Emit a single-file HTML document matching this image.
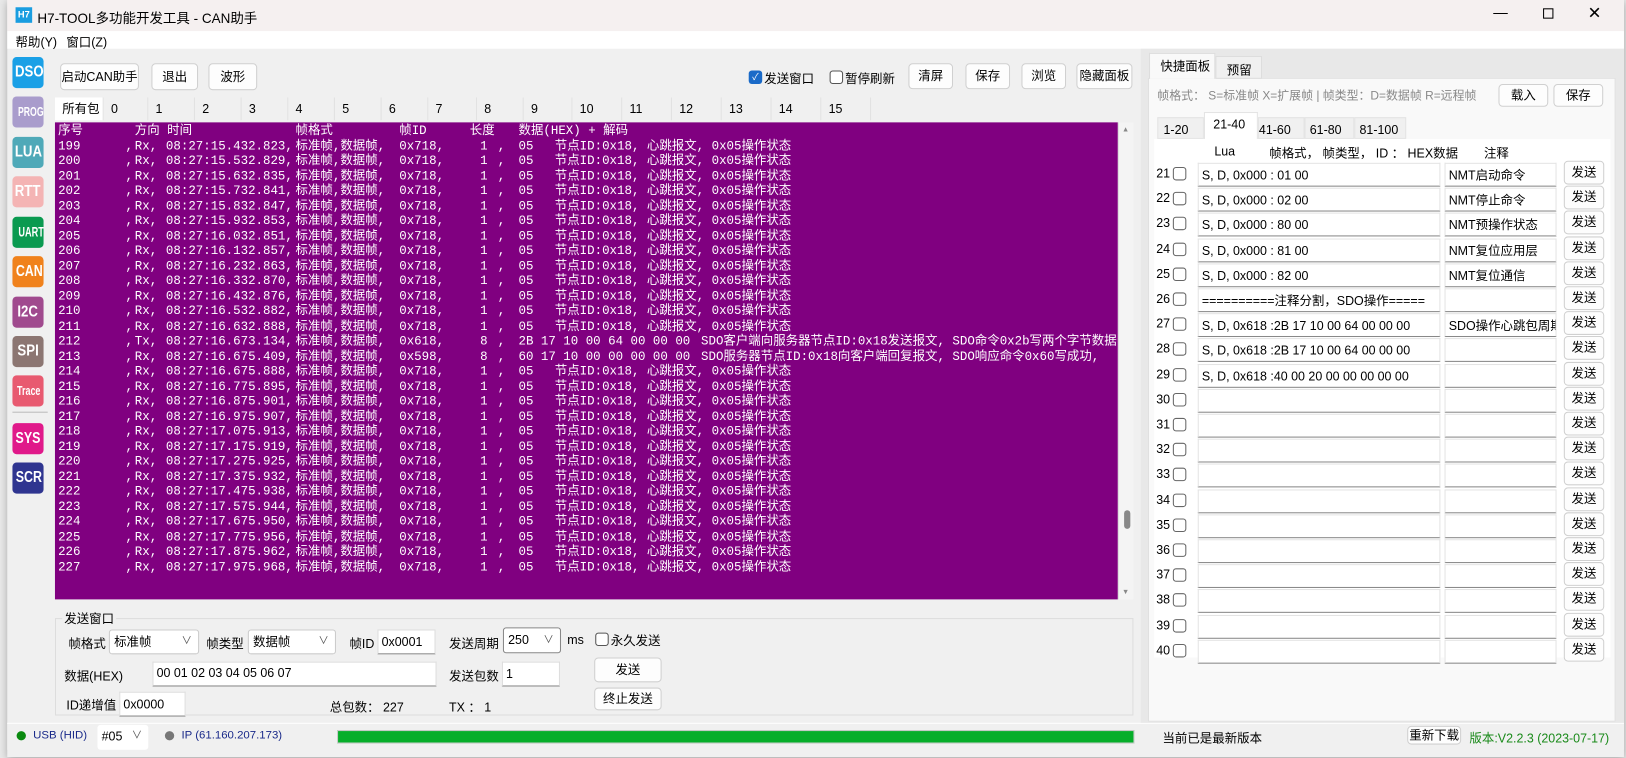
<!DOCTYPE html>
<html><head><meta charset="utf-8"><style>
*{margin:0;padding:0;box-sizing:border-box}
body{width:1626px;height:758px;background:#e9e9e9;font-family:"Liberation Sans","Noto Sans CJK SC",sans-serif;font-size:12px;color:#000;position:relative;overflow:hidden}
#wrap{position:absolute;left:0;top:0;width:1568px;height:731px;transform:scale(1.037);transform-origin:0 0}
.a{position:absolute}
.win{left:7px;top:0;width:1559px;height:730px;background:#f0f0f0;box-shadow:0 2px 8px rgba(0,0,0,.3)}
.btn{position:absolute;background:#fdfdfd;border:1px solid #d0d0d0;border-radius:4px;text-align:center;font-size:12px}
.ic{position:absolute;left:12px;width:30px;height:30px;border-radius:4px;color:#fff;font-weight:bold;font-size:15px;text-align:center;line-height:30px;overflow:hidden;white-space:nowrap}
.ic span{display:inline-block}
.log{left:53px;top:118px;width:1025px;height:460px;background:#800080;color:#fff;font-family:"Liberation Mono","WenQuanYi Zen Hei",monospace;font-size:12px;overflow:hidden}
.r{position:absolute;left:0;height:14px;line-height:14px;white-space:pre;width:1025px}
.r span{position:absolute;top:0}
.s1{left:3px}.s2{left:67px}.s3{left:107px}.s4{left:232px}.s5{left:332px}.s6{left:410px}.s7{left:447px}.s8{left:482px}.s9{left:623px}
.tab{position:absolute;top:94px;height:22px;line-height:22px;border-right:1px solid #e2e2e2;padding-left:7px;font-size:12px}
.inp{position:absolute;background:#fff;border:1px solid #ddd;border-bottom:1px solid #888;font-size:12px;padding-left:3px}
.cb{position:absolute;width:13px;height:13px;border:1px solid #555;border-radius:3px;background:#fff}
.sel{position:absolute;background:#fff;border:1px solid #ccc;border-radius:3px;font-size:12px;padding-left:4px}
.sel:after{content:"\2228";position:absolute;right:6px;top:0;color:#555;font-size:10px}
</style></head><body>
<div id="wrap">
<div class="a win"></div>
<div class="a" style="left:7px;top:0;width:1559px;height:30px;background:#f5f0f0"></div>
<div class="a" style="left:15px;top:7px;width:16px;height:15px;background:#1a9de0;color:#fff;font-size:9px;font-weight:bold;text-align:center;line-height:15px">H7</div>
<div class="a" style="left:36px;top:7px;font-size:13px">H7-TOOL多功能开发工具 - CAN助手</div>
<div class="a" style="left:1440px;top:4px;font-size:14px">&#8212;</div>
<div class="a" style="left:1488px;top:8px;width:10px;height:10px;border:1px solid #000"></div>
<div class="a" style="left:1531px;top:3px;font-size:16px">✕</div>
<div class="a" style="left:7px;top:30px;width:1559px;height:17px;background:#fff"></div>
<div class="a" style="left:15px;top:32px;font-size:12px">帮助(Y)</div>
<div class="a" style="left:64px;top:32px;font-size:12px">窗口(Z)</div>
<div class="ic" style="top:55px;background:#1aa0e6"><span style="transform:scaleX(.85)">DSO</span></div>
<div class="ic" style="top:93px;background:#a99ccc;font-size:12px"><span style="transform:scaleX(.7)">PROG</span></div>
<div class="ic" style="top:132px;background:#4fa9b8"><span style="transform:scaleX(.85)">LUA</span></div>
<div class="ic" style="top:170px;background:#f4b4b4"><span style="transform:scaleX(.85)">RTT</span></div>
<div class="ic" style="top:209px;background:#0a9a50;font-size:13px"><span style="transform:scaleX(.68)">UART</span></div>
<div class="ic" style="top:247px;background:#f0821c"><span style="transform:scaleX(.8)">CAN</span></div>
<div class="ic" style="top:286px;background:#a04a8e"><span style="transform:scaleX(.85)">I2C</span></div>
<div class="ic" style="top:324px;background:#8c7672"><span style="transform:scaleX(.85)">SPI</span></div>
<div class="ic" style="top:362px;background:#e85a70;font-size:12px"><span style="transform:scaleX(.72)">Trace</span></div>
<div class="a" style="left:12px;top:397px;width:34px;height:1px;background:#bbb"></div>
<div class="ic" style="top:408px;background:#e0198a"><span style="transform:scaleX(.8)">SYS</span></div>
<div class="ic" style="top:446px;background:#2f3590"><span style="transform:scaleX(.8)">SCR</span></div>
<div class="btn" style="left:58px;top:61px;width:76px;height:26px;line-height:24px">启动CAN助手</div>
<div class="btn" style="left:146px;top:61px;width:45px;height:26px;line-height:24px">退出</div>
<div class="btn" style="left:201px;top:61px;width:47px;height:26px;line-height:24px">波形</div>
<div class="a" style="left:722px;top:68px;width:13px;height:13px;background:#1a6ac8;border-radius:3px;color:#fff;font-size:9px;text-align:center;line-height:13px">✓</div>
<div class="a" style="left:737px;top:67px;font-size:12px">发送窗口</div>
<div class="cb" style="left:800px;top:68px"></div>
<div class="a" style="left:815px;top:67px;font-size:12px">暂停刷新</div>
<div class="btn" style="left:876px;top:61px;width:43px;height:25px;line-height:23px">清屏</div>
<div class="btn" style="left:931px;top:61px;width:43px;height:25px;line-height:23px">保存</div>
<div class="btn" style="left:985px;top:61px;width:43px;height:25px;line-height:23px">浏览</div>
<div class="btn" style="left:1038px;top:61px;width:54px;height:25px;line-height:23px">隐藏面板</div>
<div class="a" style="left:53px;top:93px;width:788px;height:24px;background:#f0f0f0"></div>
<div class="tab" style="left:53px;width:47px;background:#fff">所有包</div>
<div class="tab" style="left:100px;width:43px">0</div><div class="tab" style="left:143px;width:45px">1</div><div class="tab" style="left:188px;width:45px">2</div><div class="tab" style="left:233px;width:45px">3</div><div class="tab" style="left:278px;width:45px">4</div><div class="tab" style="left:323px;width:45px">5</div><div class="tab" style="left:368px;width:45px">6</div><div class="tab" style="left:413px;width:47px">7</div><div class="tab" style="left:460px;width:45px">8</div><div class="tab" style="left:505px;width:47px">9</div><div class="tab" style="left:552px;width:48px">10</div><div class="tab" style="left:600px;width:48px">11</div><div class="tab" style="left:648px;width:48px">12</div><div class="tab" style="left:696px;width:48px">13</div><div class="tab" style="left:744px;width:48px">14</div><div class="tab" style="left:792px;width:48px">15</div>
<div class="a log">
<div class="r" style="top:1px"><span class="s1">序号</span><span style="left:77px">方向 时间</span><span class="s4">帧格式</span><span class="s5">帧ID</span><span style="left:400px">长度</span><span style="left:447px">数据(HEX) + 解码</span></div>
</div>
<div class="a" style="left:1078px;top:118px;width:15px;height:460px;background:#f4f4f4;border-left:1px solid #ddd"></div>
<div class="a" style="left:1082px;top:122px;font-size:7px;color:#888">▲</div>
<div class="a" style="left:1082px;top:568px;font-size:7px;color:#888">▼</div>
<div class="a" style="left:1084px;top:492px;width:6px;height:18px;background:#888;border-radius:3px"></div>
<div class="a" style="left:53px;top:596px;width:1040px;height:94px;border:1px solid #ddd"></div>
<div class="a" style="left:60px;top:588px;background:#f0f0f0;padding:0 2px">发送窗口</div>
<div class="a" style="left:66px;top:612px">帧格式</div>
<div class="sel" style="left:105px;top:607px;width:87px;height:24px;line-height:22px">标准帧</div>
<div class="a" style="left:199px;top:612px">帧类型</div>
<div class="sel" style="left:239px;top:607px;width:85px;height:24px;line-height:22px">数据帧</div>
<div class="a" style="left:337px;top:612px">帧ID</div>
<div class="inp" style="left:364px;top:607px;width:56px;height:24px;line-height:22px">0x0001</div>
<div class="a" style="left:433px;top:612px">发送周期</div>
<div class="sel" style="left:485px;top:605px;width:56px;height:25px;line-height:23px;border-color:#888">250</div>
<div class="a" style="left:547px;top:610px">ms</div>
<div class="cb" style="left:574px;top:610px"></div>
<div class="a" style="left:589px;top:609px">永久发送</div>
<div class="a" style="left:62px;top:643px">数据(HEX)</div>
<div class="inp" style="left:147px;top:638px;width:274px;height:24px;line-height:20px">00 01 02 03 04 05 06 07</div>
<div class="a" style="left:433px;top:643px">发送包数</div>
<div class="inp" style="left:484px;top:638px;width:56px;height:24px;line-height:22px">1</div>
<div class="btn" style="left:573px;top:634px;width:65px;height:24px;line-height:22px">发送</div>
<div class="btn" style="left:573px;top:663px;width:65px;height:22px;line-height:20px">终止发送</div>
<div class="a" style="left:64px;top:671px">ID递增值</div>
<div class="inp" style="left:115px;top:667px;width:64px;height:24px;line-height:22px">0x0000</div>
<div class="a" style="left:318px;top:673px">总包数： 227</div>
<div class="a" style="left:433px;top:673px">TX ： 1</div>
<div class="a" style="left:7px;top:697px;width:1559px;height:26px;background:#f0f0f0;border-top:1px solid #fff"></div>
<div class="a" style="left:16px;top:705px;width:9px;height:9px;border-radius:50%;background:#0a8a10"></div>
<div class="a" style="left:32px;top:703px;color:#1a2a8a;font-size:11px">USB (HID)</div>
<div class="sel" style="left:94px;top:699px;width:49px;height:24px;line-height:22px;border:none">#05</div>
<div class="a" style="left:159px;top:705px;width:9px;height:9px;border-radius:50%;background:#777"></div>
<div class="a" style="left:175px;top:703px;color:#1a2a8a;font-size:11px">IP (61.160.207.173)</div>
<div class="a" style="left:325px;top:704px;width:769px;height:13px;background:#06ae2a;border:1px solid #ccc"></div>
<div class="a" style="left:1121px;top:703px">当前已是最新版本</div>
<div class="btn" style="left:1357px;top:700px;width:52px;height:18px;line-height:16px;font-size:12px">重新下载</div>
<div class="a" style="left:1417px;top:703px;color:#1a8a1a">版本:V2.2.3 (2023-07-17)</div>
<div class="a" style="left:1100px;top:47px;width:466px;height:650px;background:#e8e8e8"></div>
<div class="a" style="left:1107px;top:75px;width:451px;height:621px;background:#f9f9f9;border:1px solid #e0e0e0"></div>
<div class="a" style="left:1108px;top:51px;width:64px;height:25px;background:#f9f9f9;border:1px solid #ddd;border-bottom:none;padding:3px 0 0 10px">快捷面板</div>
<div class="a" style="left:1172px;top:54px;width:45px;height:22px;background:#f0f0f0;border:1px solid #ddd;padding:4px 0 0 10px">预留</div>
<div class="a" style="left:1116px;top:84px;color:#888;font-size:11.5px">帧格式： S=标准帧 X=扩展帧 | 帧类型：D=数据帧 R=远程帧</div>
<div class="btn" style="left:1445px;top:81px;width:48px;height:22px;line-height:20px">载入</div>
<div class="btn" style="left:1498px;top:81px;width:48px;height:22px;line-height:20px">保存</div>
<div class="a" style="left:1116px;top:113px;width:45px;height:21px;background:#f0f0f0;border:1px solid #e4e4e4;padding:4px 0 0 5px;font-size:12px">1-20</div>
<div class="a" style="left:1161px;top:108px;width:52px;height:26px;background:#fff;border:1px solid #e4e4e4;border-bottom:none;padding:4px 0 0 8px">21-40</div>
<div class="a" style="left:1213px;top:113px;width:45px;height:21px;background:#f0f0f0;border:1px solid #e4e4e4;padding:4px 0 0 0px">41-60</div>
<div class="a" style="left:1258px;top:113px;width:48px;height:21px;background:#f0f0f0;border:1px solid #e4e4e4;padding:4px 0 0 4px">61-80</div>
<div class="a" style="left:1306px;top:113px;width:50px;height:21px;background:#f0f0f0;border:1px solid #e4e4e4;padding:4px 0 0 4px">81-100</div>
<div class="a" style="left:1113px;top:134px;width:440px;height:500px;background:#fff"></div>
<div class="a" style="left:1171px;top:139px">Lua</div>
<div class="a" style="left:1224px;top:139px">帧格式， 帧类型， ID ： HEX数据</div>
<div class="a" style="left:1431px;top:139px">注释</div>
<div id="rows"></div>
</div>
<script>
var L=[["199","Rx,","08:27:15.432.823,"],["200","Rx,","08:27:15.532.829,"],["201","Rx,","08:27:15.632.835,"],["202","Rx,","08:27:15.732.841,"],["203","Rx,","08:27:15.832.847,"],["204","Rx,","08:27:15.932.853,"],["205","Rx,","08:27:16.032.851,"],["206","Rx,","08:27:16.132.857,"],["207","Rx,","08:27:16.232.863,"],["208","Rx,","08:27:16.332.870,"],["209","Rx,","08:27:16.432.876,"],["210","Rx,","08:27:16.532.882,"],["211","Rx,","08:27:16.632.888,"],["212","Tx,","08:27:16.673.134,"],["213","Rx,","08:27:16.675.409,"],["214","Rx,","08:27:16.675.888,"],["215","Rx,","08:27:16.775.895,"],["216","Rx,","08:27:16.875.901,"],["217","Rx,","08:27:16.975.907,"],["218","Rx,","08:27:17.075.913,"],["219","Rx,","08:27:17.175.919,"],["220","Rx,","08:27:17.275.925,"],["221","Rx,","08:27:17.375.932,"],["222","Rx,","08:27:17.475.938,"],["223","Rx,","08:27:17.575.944,"],["224","Rx,","08:27:17.675.950,"],["225","Rx,","08:27:17.775.956,"],["226","Rx,","08:27:17.875.962,"],["227","Rx,","08:27:17.975.968,"]];
var h="";
for(var i=0;i<L.length;i++){var r=L[i],id="0x718,",n="1",d="05",c="节点ID:0x18, 心跳报文, 0x05操作状态",cl="s8";
if(r[0]=="212"){id="0x618,";n="8";d="2B 17 10 00 64 00 00 00";c="SDO客户端向服务器节点ID:0x18发送报文, SDO命令0x2b写两个字节数据";cl="s9";}
if(r[0]=="213"){id="0x598,";n="8";d="60 17 10 00 00 00 00 00";c="SDO服务器节点ID:0x18向客户端回复报文, SDO响应命令0x60写成功,";cl="s9";}
h+='<div class="r" style="top:'+(15.5+i*14.5)+'px"><span class="s1">'+r[0]+'</span><span style="left:68px">,</span><span style="left:77px">'+r[1]+'</span><span class="s3">'+r[2]+'</span><span class="s4">标准帧,数据帧,</span><span class="s5">'+id+'</span><span class="s6">'+n+'</span><span style="left:427px">,</span><span class="s7">'+d+'</span><span class="'+cl+'">'+c+'</span></div>';}
document.querySelector('.log').insertAdjacentHTML('beforeend',h);
var R=[["S, D, 0x000 : 01 00","NMT启动命令"],["S, D, 0x000 : 02 00","NMT停止命令"],["S, D, 0x000 : 80 00","NMT预操作状态"],["S, D, 0x000 : 81 00","NMT复位应用层"],["S, D, 0x000 : 82 00","NMT复位通信"],["==========注释分割，SDO操作=====",""],["S, D, 0x618 :2B 17 10 00 64 00 00 00","SDO操作心跳包周期"],["S, D, 0x618 :2B 17 10 00 64 00 00 00",""],["S, D, 0x618 :40 00 20 00 00 00 00 00",""]];
var g="";
for(var j=0;j<20;j++){var t=157+j*24.2,x=R[j]||["",""];
g+='<div class="a" style="left:1115px;top:'+(t+3)+'px">'+(21+j)+'</div><div class="cb" style="left:1131px;top:'+(t+4)+'px;border-color:#666"></div>'+
'<div class="inp" style="left:1155px;top:'+t+'px;width:234px;height:23px;line-height:22px;border-color:#e4e4e4;border-bottom-color:#888;overflow:hidden;white-space:nowrap">'+x[0]+'</div>'+
'<div class="inp" style="left:1393px;top:'+t+'px;width:108px;height:23px;line-height:22px;border-color:#e4e4e4;border-bottom-color:#888;overflow:hidden;white-space:nowrap">'+x[1]+'</div>'+
'<div class="btn" style="left:1508px;top:'+(t-2)+'px;width:39px;height:23px;line-height:21px">发送</div>';}
document.getElementById('rows').innerHTML=g;
</script>
</body></html>
